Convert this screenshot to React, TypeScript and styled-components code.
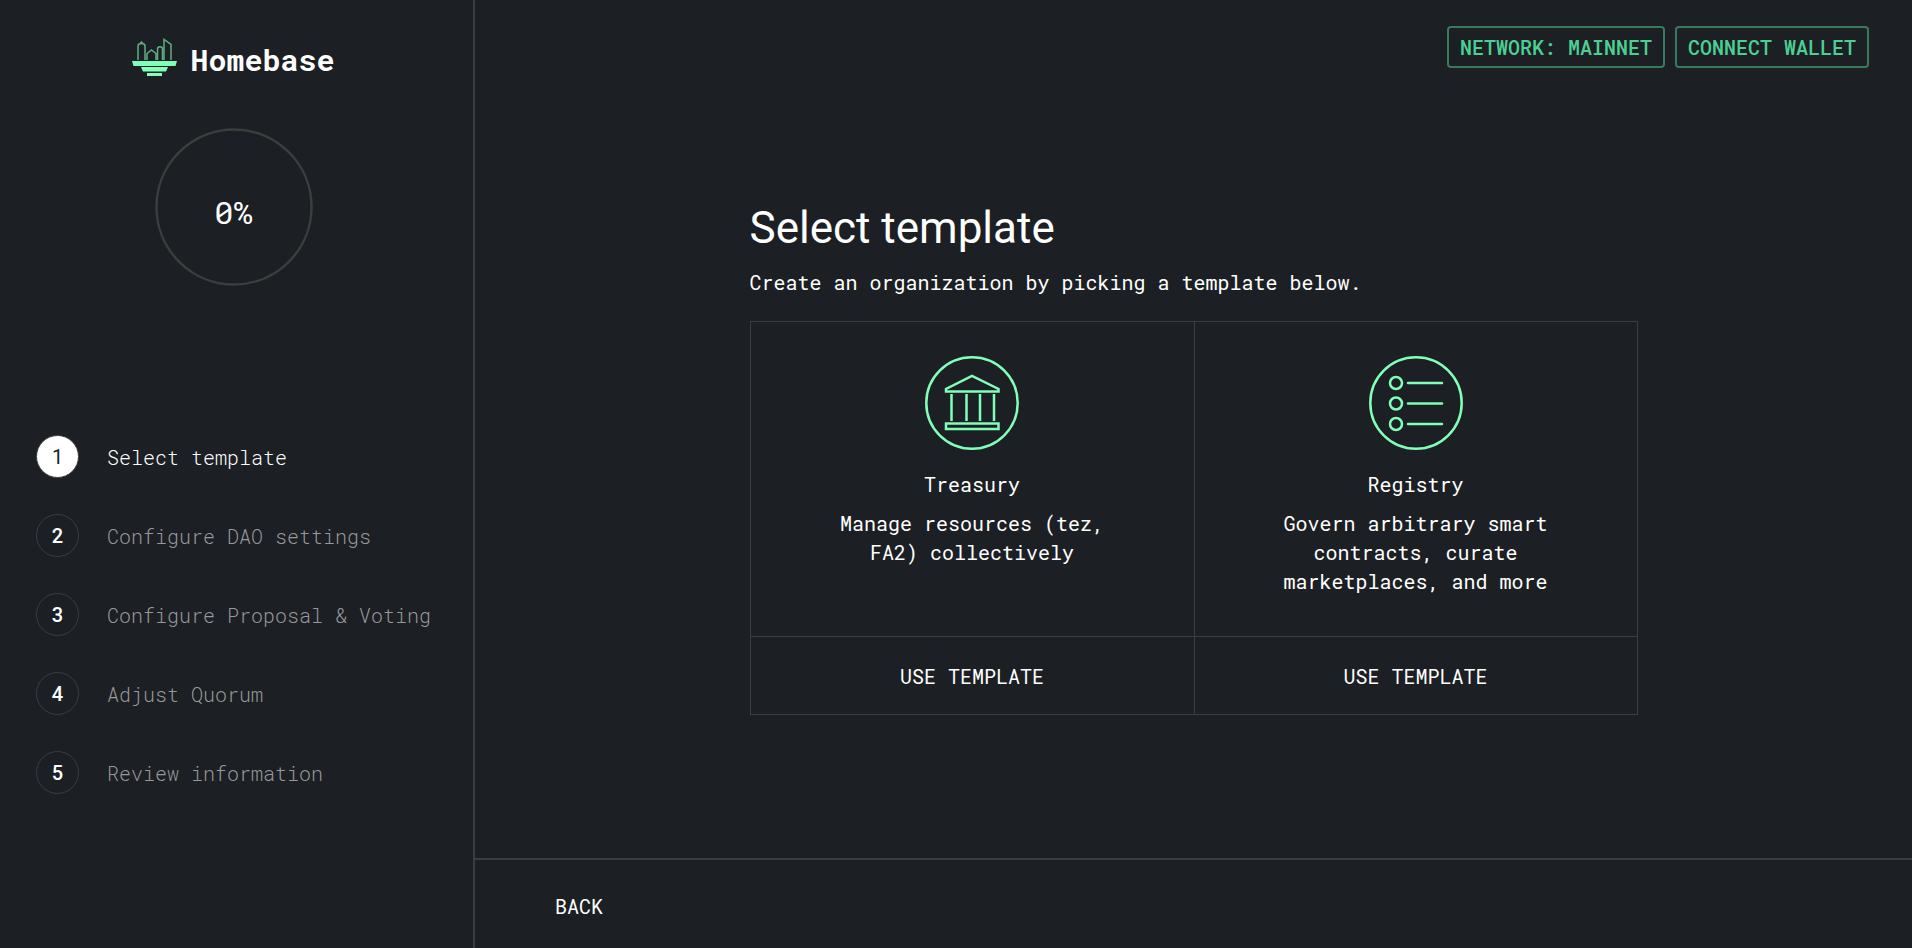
import React from "react";
import styled, { createGlobalStyle } from "styled-components";

const mono = `"Roboto Mono", "DejaVu Sans Mono", monospace`;
const sans = `Roboto, sans-serif`;
const line = "#3d3d3d";
const mint = "#81feb7";

const GlobalStyle = createGlobalStyle`
  *, *::before, *::after { box-sizing: border-box; }
  body { margin: 0; background: #1c1f23; color: #fff; font-family: ${mono}; font-size: 20px; }
  h1, h2, p, ol { margin: 0; padding: 0; font-weight: 400; }
  button { margin: 0; padding: 0; border: 0; background: none; color: inherit; font: inherit; cursor: pointer; }
`;

const Page = styled.div`
  display: flex;
  min-height: 100vh;
`;

const Sidebar = styled.aside`
  display: flex;
  flex-direction: column;
  flex: 0 0 475px;
  padding: 38px 0 40px;
  border-right: 2px solid ${line};
`;

const Brand = styled.a`
  display: flex;
  align-self: center;
  gap: 13px;
  margin-right: 6px;
  color: #fff;
  text-decoration: none;
`;

const BrandName = styled.span`
  padding-top: 2px;
  font-size: 30px;
  font-weight: 700;
  line-height: 40px;
`;

const Progress = styled.div`
  display: grid;
  place-items: center;
  align-self: center;
  margin: 48px 6px 0 0;
  & > * { grid-area: 1 / 1; }
`;

const ProgressValue = styled.span`
  padding-top: 8px;
  font-size: 32px;
`;

const Steps = styled.ol`
  display: flex;
  flex-direction: column;
  gap: 36px;
  margin-top: 149px;
  padding-left: 36px;
  list-style: none;
`;

const Step = styled.li<{ $active: boolean }>`
  display: flex;
  align-items: center;
  gap: 28px;
  color: ${({ $active }) => ($active ? "#fff" : "#96989b")};
  font-weight: 300;
`;

const StepNumber = styled.span<{ $active: boolean }>`
  display: flex;
  align-items: center;
  justify-content: center;
  width: 43px;
  height: 43px;
  border: 1px solid ${line};
  border-radius: 50%;
  background: ${({ $active }) => ($active ? "#fff" : "transparent")};
  color: ${({ $active }) => ($active ? "#1c1f23" : "#fff")};
  font-family: ${sans};
  font-weight: ${({ $active }) => ($active ? 400 : 500)};
`;

const Main = styled.main`
  display: flex;
  flex: 1;
  flex-direction: column;
  min-width: 0;
`;

const TopBar = styled.header`
  display: flex;
  justify-content: flex-end;
  gap: 10px;
  padding: 26px 43px 0;
`;

const OutlineButton = styled.button`
  height: 42px;
  padding: 0 11px;
  border: 2px solid #38795d;
  border-radius: 4px;
  color: #4bcf93;
  font-weight: 500;
  line-height: 36px;
`;

const Content = styled.section`
  flex: 1;
  width: 62%;
  max-width: 888px;
  margin: 133px auto 40px;
`;

const Title = styled.h1`
  font-family: ${sans};
  font-size: 44px;
  line-height: 54px;
`;

const Subtitle = styled.p`
  margin-top: 14px;
  line-height: 26px;
`;

const Templates = styled.div`
  display: grid;
  grid-template-columns: 1fr 1fr;
  margin-top: 26px;
  border: 1px solid ${line};
`;

const Card = styled.article`
  display: flex;
  flex-direction: column;
  & + & { border-left: 1px solid ${line}; }
`;

const CardBody = styled.div`
  display: flex;
  flex: 1;
  flex-direction: column;
  align-items: center;
  min-height: 314px;
  padding: 34px 24px;
  text-align: center;
`;

const CardTitle = styled.h2`
  margin-top: 20px;
  font-size: 20px;
  line-height: 29px;
`;

const CardText = styled.p`
  max-width: 270px;
  margin-top: 10px;
  line-height: 29px;
`;

const CardAction = styled.button`
  height: 78px;
  border-top: 1px solid ${line};
`;

const Footer = styled.footer`
  display: flex;
  align-items: center;
  height: 90px;
  padding: 4px 80px 0;
  border-top: 2px solid ${line};
`;

function LogoIcon() {
  return (
    <svg width="45" height="38" viewBox="0 0 45 38" fill="none" aria-hidden="true">
      <g stroke={mint} strokeOpacity="0.65" strokeWidth="1.5">
        <path d="M6 22V8Q6 5.500 9.500 5.500Q13 5.500 13 8V22M8 5.500L9.500 4L11 5.500" />
        <path d="M15 22V15.500L19.500 12L24 15.500V22" />
        <path d="M25.500 22V11Q25.500 8.700 28 8.700Q30.500 8.700 30.500 11V22" />
        <path d="M32 22V1.500L39 6.500V22" />
      </g>
      <g fill={mint}>
        <path d="M0 23H45L43.500 28H1.500Z" />
        <path d="M9 29H36L34 33.500H11Z" />
        <path d="M15 35H30V38H15Z" />
      </g>
    </svg>
  );
}

function TreasuryIcon() {
  return (
    <svg width="94" height="94" viewBox="0 0 94 94" fill="none" stroke={mint} strokeWidth="2.5" aria-hidden="true">
      <circle cx="47" cy="47" r="45.7" />
      <path d="M21 35.500V33L47 20L73.500 33V35.500Z" />
      <path d="M26.500 38V65M41.500 38V65M55 38V65M69 38V65" />
      <path d="M21 67.500H73.500V73H21Z" />
    </svg>
  );
}

function RegistryIcon() {
  return (
    <svg width="94" height="94" viewBox="0 0 94 94" fill="none" stroke={mint} strokeWidth="2.5" strokeLinecap="round" aria-hidden="true">
      <circle cx="47" cy="47" r="45.7" />
      {[27, 47.5, 68].map((y) => (
        <React.Fragment key={y}>
          <circle cx="27" cy={y} r="6" />
          <path d={`M39 ${y}H73`} />
        </React.Fragment>
      ))}
    </svg>
  );
}

const steps = [
  "Select template",
  "Configure DAO settings",
  "Configure Proposal & Voting",
  "Adjust Quorum",
  "Review information",
];

const templates = [
  { name: "Treasury", text: "Manage resources (tez, FA2) collectively", Icon: TreasuryIcon },
  { name: "Registry", text: "Govern arbitrary smart contracts, curate marketplaces, and more", Icon: RegistryIcon },
];

export default function App() {
  return (
    <Page>
      <GlobalStyle />
      <Sidebar>
        <Brand href="#">
          <LogoIcon />
          <BrandName>Homebase</BrandName>
        </Brand>
        <Progress>
          <svg width="158" height="158" viewBox="0 0 158 158" fill="none" aria-hidden="true">
            <circle cx="79" cy="79" r="77.5" stroke={line} strokeWidth="2.5" />
          </svg>
          <ProgressValue>0%</ProgressValue>
        </Progress>
        <Steps>
          {steps.map((label, i) => (
            <Step key={label} $active={i === 0}>
              <StepNumber $active={i === 0}>{i + 1}</StepNumber>
              <span>{label}</span>
            </Step>
          ))}
        </Steps>
      </Sidebar>
      <Main>
        <TopBar>
          <OutlineButton type="button">NETWORK: MAINNET</OutlineButton>
          <OutlineButton type="button">CONNECT WALLET</OutlineButton>
        </TopBar>
        <Content>
          <Title>Select template</Title>
          <Subtitle>Create an organization by picking a template below.</Subtitle>
          <Templates>
            {templates.map(({ name, text, Icon }) => (
              <Card key={name}>
                <CardBody>
                  <Icon />
                  <CardTitle>{name}</CardTitle>
                  <CardText>{text}</CardText>
                </CardBody>
                <CardAction type="button">USE TEMPLATE</CardAction>
              </Card>
            ))}
          </Templates>
        </Content>
        <Footer>
          <button type="button">BACK</button>
        </Footer>
      </Main>
    </Page>
  );
}
